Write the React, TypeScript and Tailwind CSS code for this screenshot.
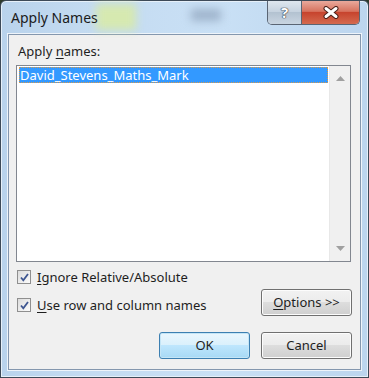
import React from 'react';

const font = { fontFamily: '"Noto Sans", "Liberation Sans", sans-serif' };

const CheckMark = () => (
  <svg width="11" height="11" viewBox="0 0 11 11">
    <path d="M2 5.5 L4.3 8.3 L9 2" fill="none" stroke="#3d5590" strokeWidth="1.8" />
  </svg>
);

const Checkbox = ({ children }: { children: React.ReactNode }) => (
  <div className="flex items-center gap-[6px] h-[16px]">
    <div className="w-[14px] h-[14px] border border-[#8f8f8f] bg-gradient-to-br from-[#dcdcdc] to-[#fbfbfb] flex items-center justify-center">
      <CheckMark />
    </div>
    <span className="text-[13px] text-[#1e1e1e] leading-none">{children}</span>
  </div>
);

const Button = ({
  children,
  isDefault,
}: {
  children: React.ReactNode;
  isDefault?: boolean;
}) => (
  <div
    className={`w-[91px] h-[27px] rounded-[3px] border flex items-center justify-center text-[13px] text-[#1e1e1e] ${
      isDefault
        ? 'border-[#3c7fb1] bg-[linear-gradient(#eaf6fd_0%,#d9f0fc_50%,#bee6fd_50%,#a7d9f5_100%)] shadow-[inset_0_0_0_1px_#c4e5f6]'
        : 'border-[#707070] bg-[linear-gradient(#f2f2f2_0%,#ebebeb_50%,#dddddd_50%,#cfcfcf_100%)] shadow-[inset_0_0_0_1px_#fcfcfc]'
    }`}
  >
    {children}
  </div>
);

const App = () => {
  return (
    <div className="w-[369px] h-[378px] bg-[#2d3a2a]" style={font}>
      <div className="w-[369px] h-[378px] rounded-t-[6px] border border-[#3d4a58] bg-[linear-gradient(90deg,#b9d3ec_0%,#c4dbf1_25%,#c9e0f5_60%,#bcd5ee_100%)] shadow-[inset_0_0_0_1px_#e6f0f9] flex flex-col">
        {/* Title bar */}
        <div className="h-[33px] flex items-start justify-between pl-[10px] pr-[8px] relative">
          <div className="absolute left-[95px] top-[3px] w-[40px] h-[26px] bg-[#d6e9b0] blur-[4px]" />
          <div className="absolute left-[190px] top-[8px] w-[30px] h-[12px] bg-[#9fb4cc] blur-[4px]" />
          <span className="relative mt-[10px] text-[14px] leading-none text-[#1b1b1b]">Apply Names</span>
          <div className="relative flex rounded-b-[5px] border border-t-0 border-[#5a6574] overflow-hidden h-[24px]">
            <div className="w-[34px] h-full bg-[linear-gradient(#dfe7ef_0%,#c4d1de_50%,#b3c2d1_50%,#c9d5e1_100%)] flex items-center justify-center border-r border-[#5a6574]">
              <span className="text-[15px] font-bold text-white leading-none [text-shadow:0_0_1px_#2c3440,0_0_1px_#2c3440,0_0_1px_#2c3440]">?</span>
            </div>
            <div className="w-[57px] h-full bg-[linear-gradient(#e9a99c_0%,#d7735f_45%,#c7442e_50%,#d46a4f_100%)] flex items-center justify-center">
              <svg width="16" height="13" viewBox="0 0 16 13">
                <path d="M3 2.5 L13 10.5 M13 2.5 L3 10.5" stroke="#4a2019" strokeWidth="5" strokeLinecap="round" />
                <path d="M3 2.5 L13 10.5 M13 2.5 L3 10.5" stroke="#ffffff" strokeWidth="3" strokeLinecap="round" />
              </svg>
            </div>
          </div>
        </div>

        {/* Client area */}
        <div className="mx-[7px] mb-[7px] flex-1 border border-[#8497ae] bg-[#f0f0f0] shadow-[0_0_0_1px_#eef4fa] flex flex-col px-[7px]">
          <div className="mt-[10px] text-[13px] leading-none text-[#1e1e1e] pl-[2px]">
            Apply <span className="underline underline-offset-2">n</span>ames:
          </div>

          {/* List box */}
          <div className="mt-[7px] w-[335px] h-[197px] border border-[#828790] bg-white flex">
            <div className="flex-1 pt-[1px] pl-[2px] pr-[1px]">
              <div className="h-[16px] bg-[#3399ff] outline-1 outline-dotted outline-[#d99a4a] -outline-offset-1 text-white text-[13px] leading-[16px] pl-[1px]">
                David_Stevens_Maths_Mark
              </div>
            </div>
            <div className="w-[21px] h-full bg-[#f0f0f0] border-l border-[#e8e8e8] flex flex-col items-center justify-between py-[10px]">
              <svg width="9" height="5" viewBox="0 0 9 5">
                <path d="M0 5 L4.5 0 L9 5 Z" fill="#a0a0a0" />
              </svg>
              <svg width="9" height="5" viewBox="0 0 9 5">
                <path d="M0 0 L4.5 5 L9 0 Z" fill="#a0a0a0" />
              </svg>
            </div>
          </div>

          {/* Options */}
          <div className="mt-[6px] flex justify-between items-start">
            <div className="flex flex-col gap-[12px] pt-[1px] pl-[1px]">
              <Checkbox>
                <span className="underline underline-offset-2">I</span>gnore Relative/Absolute
              </Checkbox>
              <Checkbox>
                <span className="underline underline-offset-2">U</span>se row and column names
              </Checkbox>
            </div>
            <div className="mt-[21px] mr-[1px]">
              <Button>
                <span className="underline underline-offset-2">O</span>ptions &gt;&gt;
              </Button>
            </div>
          </div>

          <div className="mt-[16px] mr-[1px] flex justify-end gap-[11px]">
            <Button isDefault>OK</Button>
            <Button>Cancel</Button>
          </div>
        </div>
      </div>
    </div>
  );
};

export default App;
